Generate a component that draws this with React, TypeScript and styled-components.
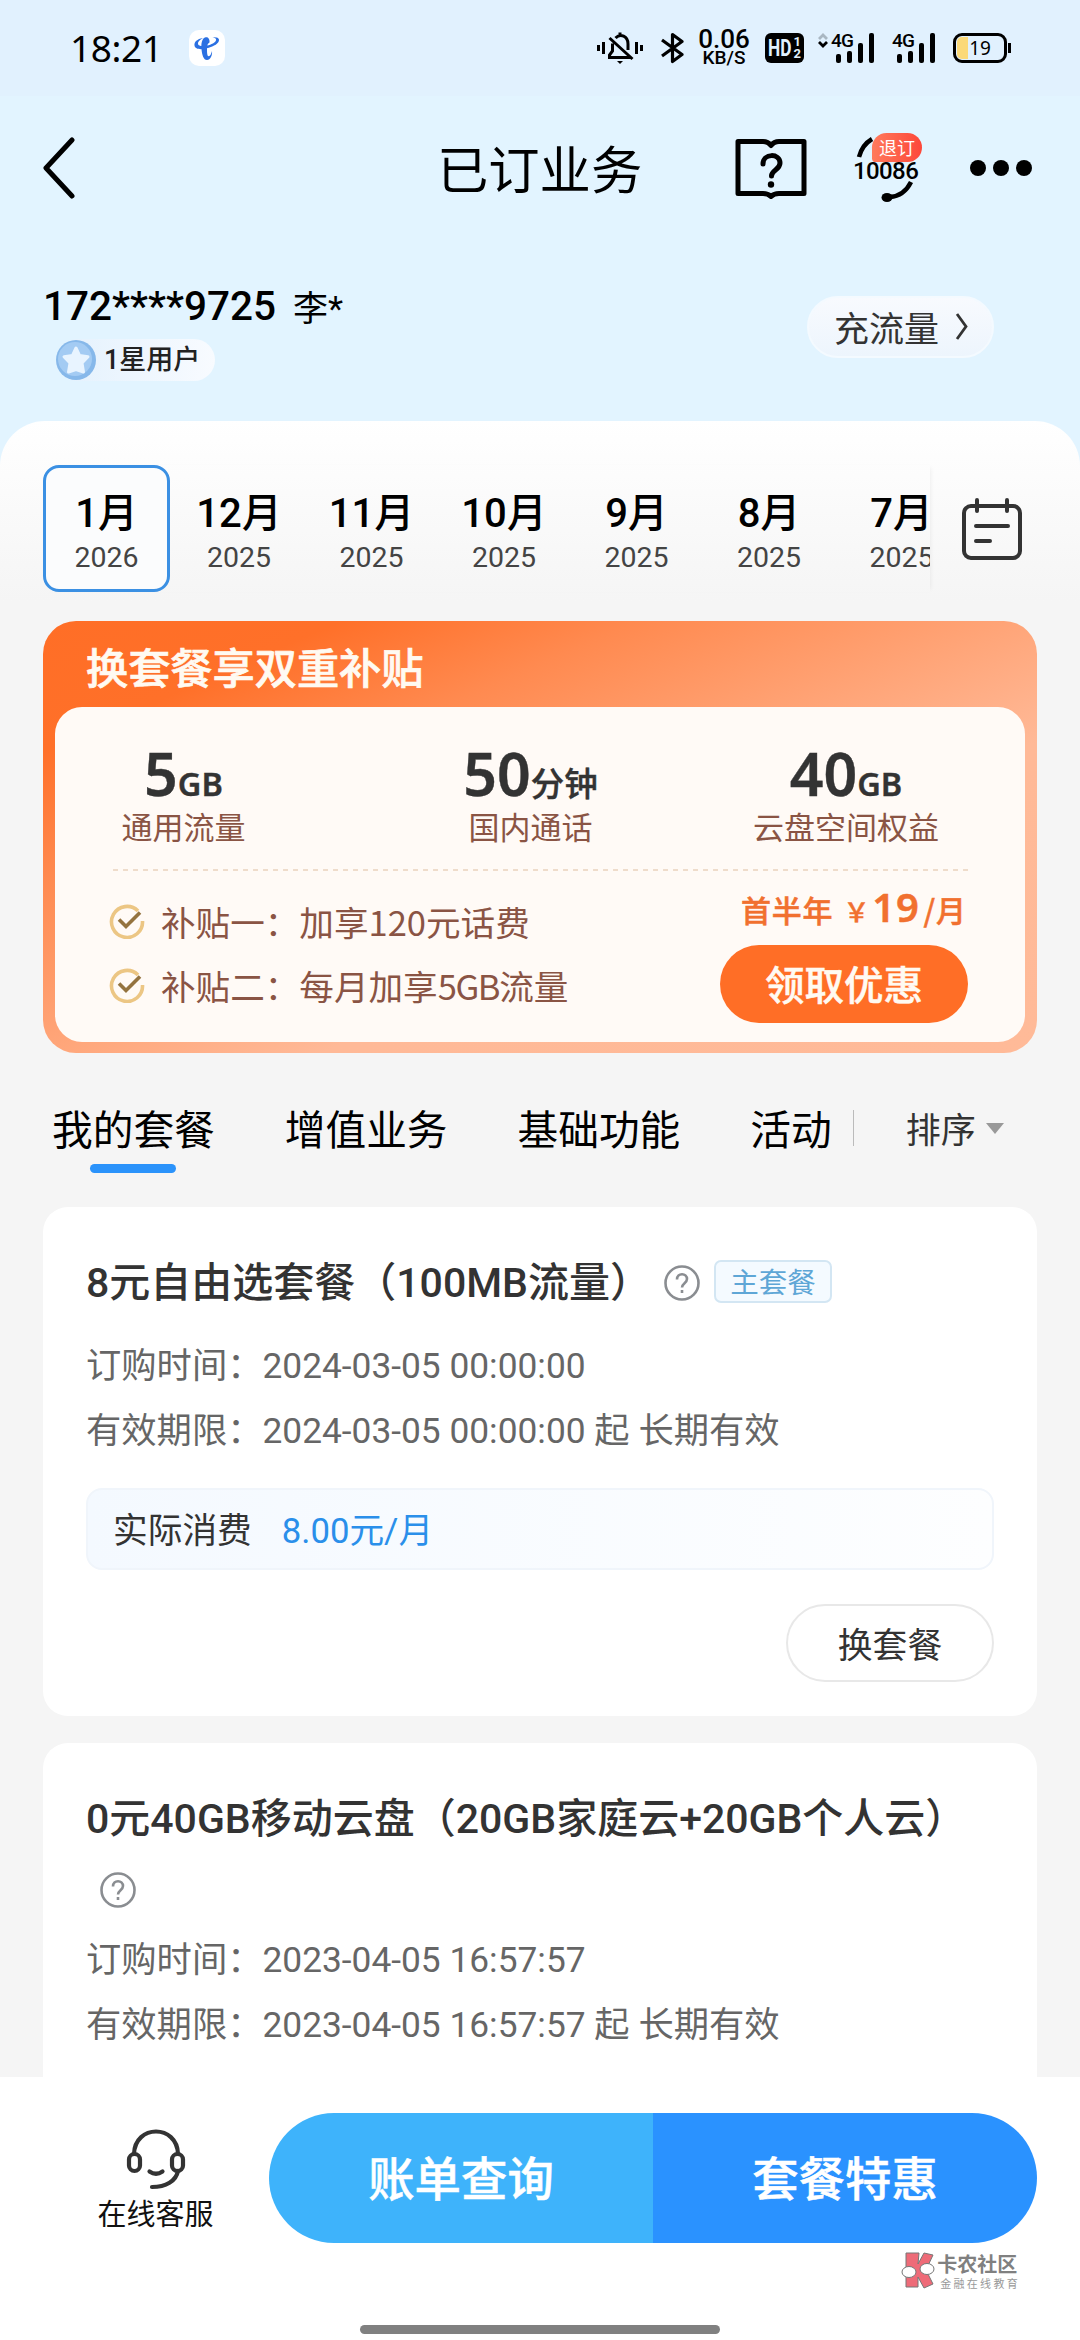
import React from "react";
import styled, { createGlobalStyle } from "styled-components";

const Global = createGlobalStyle`
  * { box-sizing: border-box; }
  body { margin: 0; background: #f5f5f5; }
`;

const Screen = styled.div`
  width: 1080px;
  height: 2340px;
  overflow: hidden;
  display: flex;
  flex-direction: column;
  background: #f5f5f5;
  font-family: Roboto, "Noto Sans CJK SC", sans-serif;
  color: #000;
  white-space: nowrap;
`;

/* Status bar */
const StatusBar = styled.div`
  flex: none;
  height: 96px;
  background: #e1f1fe;
  display: flex;
  align-items: center;
  padding: 0 69px 0 70px;
`;
const Clock = styled.span`
  font: 400 37px/44px "Noto Sans", sans-serif;
  letter-spacing: -0.4px;
  width: 119px;
`;
const AppIcon = styled.svg`
  width: 36px;
  height: 36px;
`;
const StatusIcons = styled.div`
  margin-left: auto;
  display: flex;
  align-items: center;
`;
const Glyph = styled.svg<{ $gap: number }>`
  display: block;
  margin-left: ${(p) => p.$gap}px;
`;
const Speed = styled.div`
  width: 54px;
  margin-left: 13px;
  display: flex;
  flex-direction: column;
  align-items: center;
  font: 500 26px/19px Roboto, sans-serif;
`;
const SpeedUnit = styled.span`
  font: 500 19px/18px Roboto, sans-serif;
`;
const HdBadge = styled.div`
  width: 39px;
  height: 30px;
  margin-left: 14px;
  border-radius: 6px;
  background: #000;
  color: #e1f1fe;
  display: flex;
  align-items: center;
  justify-content: space-between;
  padding: 0 3px 0 3px;
`;
const HdText = styled.span`
  width: 22px;
  font: 700 24px/30px Roboto, sans-serif;
  transform: scaleX(0.72);
  transform-origin: 0 50%;
`;
const HdSims = styled.span`
  display: flex;
  flex-direction: column;
  font: 700 13px/12px Roboto, sans-serif;
`;
const Signal = styled.div<{ $gap: number }>`
  display: flex;
  align-items: flex-start;
  height: 30px;
  margin-left: ${(p) => p.$gap}px;
`;
const NetLabel = styled.span`
  font: 500 19px/16px Roboto, sans-serif;
  letter-spacing: -0.8px;
  width: 22px;
`;
const Bars = styled.div`
  display: flex;
  align-items: flex-end;
  gap: 6px;
  height: 30px;
  margin-left: -17px;
`;
const Bar = styled.i<{ $h: number }>`
  width: 5px;
  height: ${(p) => p.$h}px;
  border-radius: 2px;
  background: #000;
`;
const Battery = styled.div`
  margin-left: 18px;
  width: 54px;
  height: 30px;
  border: 3px solid #000;
  border-radius: 9px;
  background: linear-gradient(90deg, #fbd978 11px, transparent 11px) content-box;
  padding: 1px;
  font: 400 19px/22px "Noto Sans", sans-serif;
  text-align: center;
`;
const BatteryTip = styled.i`
  width: 3px;
  height: 10px;
  margin-left: 1px;
  background: #000;
`;

/* Header */
const Header = styled.header`
  flex: none;
  height: 385px;
  background: #e2f4ff;
  padding: 0 43px;
`;
const NavBar = styled.div`
  height: 144px;
  margin-bottom: 1px;
  display: flex;
  align-items: center;
`;
const Title = styled.h1`
  margin: -3px 0 0 360px;
  width: 208px;
  font: 400 51.3px/60px "Noto Sans CJK SC", sans-serif;
`;
const NavIcon = styled.svg`
  display: block;
  margin-left: 90px;
`;
const Hotline = styled.div`
  position: relative;
  width: 70px;
  height: 70px;
  margin-left: 46px;
`;
const HotlineText = styled.span`
  position: absolute;
  left: 0;
  top: 26px;
  font: 500 24px/24px Roboto, sans-serif;
  letter-spacing: -0.6px;
`;
const HotlineBadge = styled.span`
  position: absolute;
  left: 19px;
  top: 0;
  width: 50px;
  height: 29px;
  border-radius: 15px 15px 15px 4px;
  background: linear-gradient(90deg, #ff7a5c, #fd4739);
  color: #fff;
  text-align: center;
  font: 400 18px/28px "Noto Sans CJK SC", sans-serif;
`;
const More = styled.svg`
  margin-left: 46px;
`;
const Account = styled.div`
  display: flex;
  justify-content: space-between;
  padding: 41px 43px 0 0;
`;
const Phone = styled.div`
  display: flex;
  align-items: center;
  height: 47px;
  font-size: 40.5px;
  font-weight: 500;
  gap: 17px;
`;
const Owner = styled.span`
  font-size: 35px;
  font-weight: 400;
`;
const Level = styled.div`
  display: flex;
  align-items: center;
  width: 159px;
  height: 42px;
  margin: 10px 0 0 13px;
  border-radius: 21px;
  background: linear-gradient(90deg, #e3f1fd, #f8fbff);
  font: 500 27px/42px Roboto, "Noto Sans CJK SC", sans-serif;
  color: #222;
  gap: 8px;
`;
const Recharge = styled.button`
  width: 187px;
  height: 62px;
  margin-top: 14px;
  border: 2px solid #f4faff;
  border-radius: 31px;
  background: linear-gradient(180deg, #f8fafe, #edf5fd);
  display: flex;
  align-items: center;
  justify-content: center;
  gap: 16px;
  padding: 0 0 1px 1px;
  color: #333;
  font: 400 35px/56px "Noto Sans CJK SC", sans-serif;
`;

/* Content panel */
const Panel = styled.main`
  flex: none;
  margin-top: -60px;
  height: 1656px;
  overflow: hidden;
  border-radius: 45px 45px 0 0;
  background: linear-gradient(180deg, #fff 0, #f5f5f5 180px);
  padding: 44px 43px 0;
`;
const MonthRow = styled.div`
  display: flex;
  align-items: center;
  height: 127px;
`;
const Months = styled.div`
  width: 887px;
  height: 127px;
  display: flex;
  gap: 5.5px;
  overflow: hidden;
  box-shadow: 3px 0 5px -3px rgba(0, 0, 0, 0.08);
`;
const Month = styled.div<{ $on?: boolean }>`
  flex: none;
  width: 127px;
  height: 127px;
  border: 3px solid ${(p) => (p.$on ? "#3b90e3" : "transparent")};
  border-radius: 16px;
  background: ${(p) => (p.$on ? "#fbfcfd" : "transparent")};
  display: flex;
  flex-direction: column;
  align-items: center;
  padding: 23px 0 0 0;
  font: 500 40px/46px Roboto, "Noto Sans CJK SC", sans-serif;
`;
const Year = styled.span`
  margin-top: 4px;
  font: 400 28.5px/34px Roboto, sans-serif;
  color: #444;
`;
const CalendarIcon = styled.svg`
  margin-left: 32px;
`;

/* Promo banner */
const Promo = styled.section`
  width: 994px;
  height: 432px;
  margin-top: 29px;
  border-radius: 33px;
  padding: 0 12px 11px;
  background: linear-gradient(to bottom right, #ff6e26 0%, #ff7029 15%, #ff8a50 30%, #ffa67a 50%, #ffb997 64%, #ffba98 100%);
  font-family: "Noto Sans", "Noto Sans CJK SC", sans-serif;
`;
const PromoTitle = styled.h2`
  margin: 0;
  height: 86px;
  padding: 3px 0 0 31px;
  font: 500 42.2px/84px "Noto Sans CJK SC", sans-serif;
  -webkit-text-stroke: 0.7px #fffaf2;
  color: #fffaf2;
`;
const PromoBody = styled.div`
  height: 335px;
  border-radius: 27px;
  background: #fffaf6;
  padding: 33px 57px 0 54px;
`;
const Benefits = styled.div`
  display: grid;
  grid-template-columns: 149px 545px 86px;
  height: 129px;
  justify-items: center;
`;
const Benefit = styled.div`
  display: flex;
  flex-direction: column;
  align-items: center;
`;
const Amount = styled.div`
  height: 67px;
  font: 600 59px/67px "Noto Sans", sans-serif;
  -webkit-text-stroke: 0.4px #333;
  color: #333;
`;
const Unit = styled.span`
  font: 600 32.5px/40px "Noto Sans", sans-serif;
`;
const UnitHan = styled.span`
  font: 500 33.5px/40px "Noto Sans CJK SC", sans-serif;
`;
const BenefitLabel = styled.span`
  font: 400 31px/38px "Noto Sans CJK SC", sans-serif;
  color: #8a5444;
`;
const Dashes = styled.div`
  height: 2px;
  margin: 0 0 0 4px;
  background: repeating-linear-gradient(90deg, #efdccb 0 5px, transparent 5px 10px);
`;
const Offer = styled.div`
  display: flex;
  justify-content: space-between;
`;
const Subsidies = styled.div`
  display: flex;
  flex-direction: column;
  padding-top: 18px;
`;
const Subsidy = styled.div`
  display: flex;
  align-items: center;
  height: 64px;
  gap: 16px;
  font: 400 34.6px/50px "Noto Sans CJK SC", sans-serif;
  color: #8a5444;
`;
const Tight = styled.span`
  letter-spacing: -1.4px;
`;
const Claim = styled.div`
  width: 248px;
  padding-top: 19px;
`;
const Price = styled.div`
  display: flex;
  align-items: baseline;
  height: 55px;
  padding-left: 21px;
  font: 500 30px/34px "Noto Sans CJK SC", sans-serif;
  -webkit-text-stroke: 0.5px #f1702f;
  letter-spacing: 0.8px;
  color: #f1702f;
`;
const Currency = styled.span`
  font-size: 26px;
  margin: 0 2px 0 10px;
`;
const PriceValue = styled.b`
  font: 600 40px/34px "Noto Sans", sans-serif;
  margin-right: 4px;
`;
const ClaimButton = styled.button`
  width: 248px;
  height: 78px;
  border: 0;
  border-radius: 39px;
  background: #ff6e26;
  color: #fffaf2;
  padding: 0 0 3px;
  font: 500 39.5px/74px "Noto Sans CJK SC", sans-serif;
  -webkit-text-stroke: 0.5px #fffaf2;
`;

/* Tabs */
const Tabs = styled.nav`
  display: flex;
  height: 154px;
  padding: 45px 0 0 9px;
  font: 400 40.7px/60px "Noto Sans CJK SC", sans-serif;
`;
const Tab = styled.div`
  flex: none;
  margin-right: 70px;
  display: flex;
  flex-direction: column;
  align-items: center;
  &:nth-child(4) { margin-right: 21px; }
`;
const TabMark = styled.i`
  width: 86px;
  height: 9px;
  margin-top: 6px;
  border-radius: 5px;
  background: #2b93fb;
`;
const TabDivider = styled.i`
  width: 1px;
  height: 36px;
  margin-top: 12px;
  background: #bbb;
`;
const Sort = styled.div`
  display: flex;
  align-items: center;
  height: 60px;
  gap: 9px;
  margin-left: 52px;
  font-size: 35px;
  color: #333;
`;

/* Plan cards */
const Card = styled.article<{ $h: number }>`
  height: ${(p) => p.$h}px;
  margin-bottom: 27px;
  border-radius: 25px;
  background: #fff;
  padding: 43px 43px 0;
`;
const CardTitle = styled.div`
  display: flex;
  align-items: center;
  height: 66px;
  font: 500 41px/66px Roboto, "Noto Sans CJK SC", sans-serif;
  color: #333;
`;
const MainTag = styled.span`
  width: 118px;
  height: 43px;
  margin: -4px 0 0 14px;
  border: 2px solid #d3e6f3;
  border-radius: 7px;
  background: #f4faff;
  color: #5ea6d6;
  text-align: center;
  font: 400 28.5px/38px "Noto Sans CJK SC", sans-serif;
`;
const HelpRow = styled.div`
  height: 76px;
  display: flex;
  align-items: center;
  padding: 0 0 1px 14px;
`;
const Line = styled.div`
  height: 65px;
  display: flex;
  align-items: center;
  font: 400 35.3px/65px Roboto, "Noto Sans CJK SC", sans-serif;
  color: #666;
`;
const Details = styled.div`
  padding-top: 18px;
`;
const Cost = styled.div`
  height: 82px;
  margin-top: 24px;
  border: 2px solid #f0f5fb;
  border-radius: 16px;
  background: linear-gradient(90deg, #f4f9ff, #fdfeff);
  display: flex;
  align-items: center;
  padding: 3px 0 0 25px;
  gap: 30px;
  font: 400 34.7px/60px Roboto, "Noto Sans CJK SC", sans-serif;
  color: #333;
`;
const CostValue = styled.span`
  color: #2a8fea;
`;
const CardActions = styled.div`
  display: flex;
  justify-content: flex-end;
  margin-top: 34px;
`;
const OutlineButton = styled.button`
  width: 208px;
  height: 78px;
  border: 2px solid #e8e8e8;
  border-radius: 39px;
  background: #fff;
  color: #333;
  padding: 0;
  font: 400 34.8px/60px "Noto Sans CJK SC", sans-serif;
`;

/* Footer */
const Footer = styled.footer`
  flex: none;
  height: 263px;
  background: #fff;
  display: flex;
  flex-direction: column;
  padding-top: 36px;
`;
const ActionRow = styled.div`
  display: flex;
  height: 130px;
`;
const Service = styled.div`
  width: 269px;
  padding: 16px 0 0 42px;
  display: flex;
  flex-direction: column;
  align-items: center;
  font: 400 29px/42px "Noto Sans CJK SC", sans-serif;
  color: #111;
`;
const Pill = styled.div`
  display: flex;
  width: 768px;
  height: 130px;
  border-radius: 65px;
  overflow: hidden;
`;
const PillHalf = styled.button<{ $c: string }>`
  flex: 1;
  border: 0;
  padding: 0 0 4px;
  background: ${(p) => p.$c};
  color: #fff;
  font: 500 46.4px/60px "Noto Sans CJK SC", sans-serif;
  -webkit-text-stroke: 0.5px #fff;
`;
const Brand = styled.div`
  display: flex;
  align-self: flex-end;
  margin: 8px 60px 0 0;
  height: 40px;
  gap: 2px;
`;
const BrandText = styled.div`
  display: flex;
  flex-direction: column;
  font: 700 20px/26px "Noto Sans CJK SC", sans-serif;
  color: #808080;
`;
const BrandSub = styled.span`
  font: 400 11px/12px "Noto Sans CJK SC", sans-serif;
  letter-spacing: 2.3px;
  margin-left: 3px;
  color: #999;
`;
const HomeBar = styled.i`
  align-self: center;
  width: 360px;
  height: 9px;
  margin-top: 34px;
  border-radius: 5px;
  background: #808080;
`;

const Help = ({ gap = 0 }: { gap?: number }) => (
  <Glyph $gap={gap} width="36" height="36" viewBox="0 0 36 36" fill="none" stroke="#8a8d91" strokeWidth="2.6">
    <circle cx="18" cy="18" r="16.5" />
    <path d="M13 14.5c0-7 10-7 10-.4 0 4-5 4.2-5 8.400" />
    <path d="M18 25v3" />
  </Glyph>
);

const Check = () => (
  <svg width="36" height="36" viewBox="0 0 36 36" fill="none">
    <path d="M29 8A15.500 15.500 0 1 0 33.500 18" stroke="#ecc684" strokeWidth="3.600" />
    <path d="M10 16.500l7 7L31 9.500" stroke="#94733f" strokeWidth="3.600" />
  </svg>
);

const bars = [9, 12, 20, 30];
const months: [string, string][] = [
  ["1月", "2026"],
  ["12月", "2025"],
  ["11月", "2025"],
  ["10月", "2025"],
  ["9月", "2025"],
  ["8月", "2025"],
  ["7月", "2025"],
];

export default function App() {
  return (
    <Screen>
      <Global />
      <StatusBar>
        <Clock>18:21</Clock>
        <AppIcon viewBox="0 0 36 36">
          <rect width="36" height="36" rx="10" fill="#fff" />
          <g fill="#2b70e2">
            <path d="M14 8C8 9 5 12 5.500 15.500c.6 4 7 4.500 13.500 2.500 6-1.800 11-4.500 11-8C30 7.500 27 7 23.500 7.200c3 .5 4 1.500 3.500 3-.8 2.500-4.500 4.300-9 5.300-4.500 1-8.500.7-9-1.500C8.600 12 10.500 9.800 14 8z" />
            <path d="M20.500 12.500c.5-4-2-6-4.500-5-3 1.200-4 6-3.500 11.500.5 6 2 11 5.500 11 3.500-.2 5.500-4.500 5-9-.8 3-1.800 5.200-3.300 5.200-1.500 0-1.700-3.200-1.700-7.700 0-3 .5-5 2.500-6z" />
          </g>
        </AppIcon>
        <StatusIcons>
          <Glyph $gap={0} width="46" height="32" viewBox="0 0 46 32" fill="none" stroke="#000" strokeWidth="3">
            <path d="M1.500 13v6M6.500 10v12M39.500 10v12M44.500 13v6" />
            <path d="M34 25.500H12.500v-2.500l3-4v-7.500M18.500 6c5-5 12.500-2 12.500 6v6M23 .5v3M12.500 6l23 21" />
            <path d="M20 29h6l-3 3z" fill="#000" stroke="none" />
          </Glyph>
          <Glyph $gap={18} width="23" height="32" viewBox="0 0 23 32" fill="none" stroke="#000" strokeWidth="3.200">
            <path d="M1 8l20 14.500-9.500 7V2.500L21 9.500 1 24" strokeLinejoin="round" />
          </Glyph>
          <Speed>
            0.06<SpeedUnit>KB/S</SpeedUnit>
          </Speed>
          <HdBadge>
            <HdText>HD</HdText>
            <HdSims>
              <span>1</span>
              <span>2</span>
            </HdSims>
          </HdBadge>
          <Glyph $gap={14} width="10" height="30" viewBox="0 0 10 30" fill="none" strokeWidth="2.800">
            <path d="M1 6l4-4 4 4" stroke="#a9b7c2" />
            <path d="M1 9l4 4 4-4" stroke="#000" />
          </Glyph>
          <Signal $gap={3}>
            <NetLabel>4G</NetLabel>
            <Bars>{bars.map((h) => <Bar key={h} $h={h} />)}</Bars>
          </Signal>
          <Signal $gap={18}>
            <NetLabel>4G</NetLabel>
            <Bars>{bars.map((h) => <Bar key={h} $h={h} />)}</Bars>
          </Signal>
          <Battery>19</Battery>
          <BatteryTip />
        </StatusIcons>
      </StatusBar>

      <Header>
        <NavBar>
          <svg width="34" height="62" viewBox="0 0 34 62" fill="none" stroke="#000" strokeWidth="5" strokeLinecap="round" strokeLinejoin="round">
            <path d="M29 3L3 31l26 28" />
          </svg>
          <Title>已订业务</Title>
          <NavIcon width="72" height="62" viewBox="0 0 72 62" fill="none" stroke="#000" strokeWidth="5" strokeLinejoin="round">
            <path d="M3 4.500h25q5 0 8 4 3-4 8-4h25v52H44q-5 0-8 3-3-3-8-3H3z" />
            <path d="M28 27c0-11 17-11 17-1 0 7-8.500 7-8.500 13" strokeLinecap="round" />
            <circle cx="36" cy="47.500" r="3.200" fill="#000" stroke="none" />
          </NavIcon>
          <Hotline>
            <svg width="70" height="70" viewBox="0 0 70 70" fill="none" stroke="#000" strokeWidth="4.500">
              <path d="M6 24Q9 12 19 6" />
              <path d="M58 49Q51 63 37 64" />
              <ellipse cx="34" cy="64.500" rx="5.500" ry="4.500" fill="#000" stroke="none" />
            </svg>
            <HotlineText>10086</HotlineText>
            <HotlineBadge>退订</HotlineBadge>
          </Hotline>
          <More width="64" height="18" viewBox="0 0 64 18">
            <circle cx="9" cy="9" r="8" />
            <circle cx="32" cy="9" r="8" />
            <circle cx="55" cy="9" r="8" />
          </More>
        </NavBar>
        <Account>
          <div>
            <Phone>
              172****9725<Owner>李*</Owner>
            </Phone>
            <Level>
              <svg width="40" height="42" viewBox="0 0 40 42">
                <circle cx="20" cy="21" r="20" fill="#86b8ea" />
                <circle cx="19" cy="20" r="17" fill="#a3cbf3" />
                <path d="M20 9l3.500 7.500 8.500 1.300-6 6.200 1.500 9-7.500-2.500-7.500 2.500 1.500-9-6-6.200 8.500-1.300z" fill="#e8f4ff" stroke="#e8f4ff" strokeWidth="3" strokeLinejoin="round" />
              </svg>
              1星用户
            </Level>
          </div>
          <Recharge>
            充流量
            <svg width="13" height="27" viewBox="0 0 13 27" fill="none" stroke="#333" strokeWidth="2.800">
              <path d="M2 1l9 12.500L2 26" />
            </svg>
          </Recharge>
        </Account>
      </Header>

      <Panel>
        <MonthRow>
          <Months>
            {months.map(([m, y], i) => (
              <Month key={m} $on={i === 0}>
                {m}
                <Year>{y}</Year>
              </Month>
            ))}
          </Months>
          <CalendarIcon width="60" height="62" viewBox="0 0 60 62" fill="none" stroke="#333" strokeWidth="4" strokeLinecap="round">
            <rect x="2" y="8" width="56" height="52" rx="7" />
            <path d="M15 2v11M45 2v11" />
            <path d="M14 28h32M14 43h14" />
          </CalendarIcon>
        </MonthRow>

        <Promo>
          <PromoTitle>换套餐享双重补贴</PromoTitle>
          <PromoBody>
            <Benefits>
              <Benefit>
                <Amount>5<Unit>GB</Unit></Amount>
                <BenefitLabel>通用流量</BenefitLabel>
              </Benefit>
              <Benefit>
                <Amount>50<UnitHan>分钟</UnitHan></Amount>
                <BenefitLabel>国内通话</BenefitLabel>
              </Benefit>
              <Benefit>
                <Amount>40<Unit>GB</Unit></Amount>
                <BenefitLabel>云盘空间权益</BenefitLabel>
              </Benefit>
            </Benefits>
            <Dashes />
            <Offer>
              <Subsidies>
                <Subsidy><Check />补贴一：加享120元话费</Subsidy>
                <Subsidy>
                  <Check />
                  <span>补贴二：每月加享<Tight>5GB</Tight>流量</span>
                </Subsidy>
              </Subsidies>
              <Claim>
                <Price>
                  首半年<Currency>￥</Currency>
                  <PriceValue>19</PriceValue>/月
                </Price>
                <ClaimButton>领取优惠</ClaimButton>
              </Claim>
            </Offer>
          </PromoBody>
        </Promo>

        <Tabs>
          <Tab>我的套餐<TabMark /></Tab>
          <Tab>增值业务</Tab>
          <Tab>基础功能</Tab>
          <Tab>活动</Tab>
          <TabDivider />
          <Sort>
            排序
            <svg width="20" height="11" viewBox="0 0 20 11">
              <path d="M1 0h18l-9 11z" fill="#999" />
            </svg>
          </Sort>
        </Tabs>

        <Card $h={509}>
          <CardTitle>
            8元自由选套餐（100MB流量）
            <Help gap={13} />
            <MainTag>主套餐</MainTag>
          </CardTitle>
          <Details>
            <Line>订购时间：2024-03-05 00:00:00</Line>
            <Line>有效期限：2024-03-05 00:00:00 起 长期有效</Line>
          </Details>
          <Cost>
            实际消费<CostValue>8.00元/月</CostValue>
          </Cost>
          <CardActions>
            <OutlineButton>换套餐</OutlineButton>
          </CardActions>
        </Card>

        <Card $h={509}>
          <CardTitle>0元40GB移动云盘（20GB家庭云+20GB个人云）</CardTitle>
          <HelpRow><Help /></HelpRow>
          <Line>订购时间：2023-04-05 16:57:57</Line>
          <Line>有效期限：2023-04-05 16:57:57 起 长期有效</Line>
        </Card>
      </Panel>

      <Footer>
        <ActionRow>
          <Service>
            <svg width="60" height="62" viewBox="0 0 60 62" fill="none" stroke="#333" strokeWidth="4.200" strokeLinecap="round">
              <path d="M8 25C9 -5 51 -5 52 25M52 42C50 52 40 58 26 58" />
              <rect x="3" y="25" width="11" height="17" rx="5.500" />
              <rect x="46" y="25" width="11" height="17" rx="5.500" />
              <path d="M23.500 42.500q6.500 4.500 13 0" />
            </svg>
            在线客服
          </Service>
          <Pill>
            <PillHalf $c="#3eb3fb">账单查询</PillHalf>
            <PillHalf $c="#2a92ff">套餐特惠</PillHalf>
          </Pill>
        </ActionRow>
        <Brand>
          <svg width="34" height="38" viewBox="0 0 34 38" stroke="#777" strokeWidth="1">
            <path d="M5 2h13l-1 11 6-11 9 2-7 15 7 14-9 4-6-11v10H5z" fill="#ee6b78" />
            <ellipse cx="8" cy="21" rx="7" ry="5.500" fill="#fff" />
            <ellipse cx="26" cy="18" rx="7" ry="5.500" fill="#fff" />
          </svg>
          <BrandText>
            卡农社区
            <BrandSub>金融在线教育</BrandSub>
          </BrandText>
        </Brand>
        <HomeBar />
      </Footer>
    </Screen>
  );
}
